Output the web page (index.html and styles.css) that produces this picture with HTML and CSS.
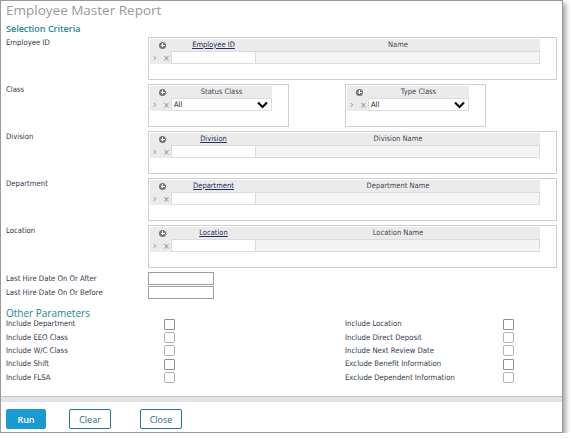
FILE: index.html
```html
<!DOCTYPE html>
<html lang="en">
<head>
  <meta charset="UTF-8">
  <title>Employee Master Report</title>
  <link rel="stylesheet" href="styles.css">
</head>
<body>
  <div class="report">
    <h1 class="report-title">Employee Master Report</h1>

    <div class="report-body">
      <h2 class="section-title">Selection Criteria</h2>

      <div class="field">
        <label class="field-label">Employee ID</label>
        <div class="lookup">
          <div class="lookup-head">
            <span class="icon-col"><span class="add-icon"></span></span>
            <span class="key-col"><a href="#">Employee ID</a></span>
            <span class="name-col">Name</span>
          </div>
          <div class="lookup-row">
            <span class="icon-col"><span class="arrow">›</span><span class="remove">×</span></span>
            <span class="key-col cell-input"></span>
            <span class="name-col cell-readonly"></span>
          </div>
        </div>
      </div>

      <div class="field">
        <label class="field-label">Class</label>
        <div class="pair">
          <div class="lookup lookup-small">
            <div class="lookup-head">
              <span class="icon-col"><span class="add-icon"></span></span>
              <span class="select-col">Status Class</span>
            </div>
            <div class="lookup-row">
              <span class="icon-col"><span class="arrow">›</span><span class="remove">×</span></span>
              <span class="select-col cell-select">All<svg class="chevron" width="11" height="8" viewBox="0 0 11 8"><path d="M1 1.5 L5.5 6 L10 1.5" fill="none" stroke="#111" stroke-width="2.2"/></svg></span>
            </div>
          </div>
          <div class="lookup lookup-small">
            <div class="lookup-head">
              <span class="icon-col"><span class="add-icon"></span></span>
              <span class="select-col">Type Class</span>
            </div>
            <div class="lookup-row">
              <span class="icon-col"><span class="arrow">›</span><span class="remove">×</span></span>
              <span class="select-col cell-select">All<svg class="chevron" width="11" height="8" viewBox="0 0 11 8"><path d="M1 1.5 L5.5 6 L10 1.5" fill="none" stroke="#111" stroke-width="2.2"/></svg></span>
            </div>
          </div>
        </div>
      </div>

      <div class="field">
        <label class="field-label">Division</label>
        <div class="lookup">
          <div class="lookup-head">
            <span class="icon-col"><span class="add-icon"></span></span>
            <span class="key-col"><a href="#">Division</a></span>
            <span class="name-col">Division Name</span>
          </div>
          <div class="lookup-row">
            <span class="icon-col"><span class="arrow">›</span><span class="remove">×</span></span>
            <span class="key-col cell-input"></span>
            <span class="name-col cell-readonly"></span>
          </div>
        </div>
      </div>

      <div class="field">
        <label class="field-label">Department</label>
        <div class="lookup">
          <div class="lookup-head">
            <span class="icon-col"><span class="add-icon"></span></span>
            <span class="key-col"><a href="#">Department</a></span>
            <span class="name-col">Department Name</span>
          </div>
          <div class="lookup-row">
            <span class="icon-col"><span class="arrow">›</span><span class="remove">×</span></span>
            <span class="key-col cell-input"></span>
            <span class="name-col cell-readonly"></span>
          </div>
        </div>
      </div>

      <div class="field">
        <label class="field-label">Location</label>
        <div class="lookup">
          <div class="lookup-head">
            <span class="icon-col"><span class="add-icon"></span></span>
            <span class="key-col"><a href="#">Location</a></span>
            <span class="name-col">Location Name</span>
          </div>
          <div class="lookup-row">
            <span class="icon-col"><span class="arrow">›</span><span class="remove">×</span></span>
            <span class="key-col cell-input"></span>
            <span class="name-col cell-readonly"></span>
          </div>
        </div>
      </div>

      <div class="date-field">
        <label class="field-label">Last Hire Date On Or After</label>
        <input class="date-input" type="text">
      </div>
      <div class="date-field">
        <label class="field-label">Last Hire Date On Or Before</label>
        <input class="date-input" type="text">
      </div>

      <h2 class="section-title other">Other Parameters</h2>

      <div class="params">
        <div class="param"><span>Include Department</span><span class="check"></span></div>
        <div class="param"><span>Include Location</span><span class="check"></span></div>
        <div class="param"><span>Include EEO Class</span><span class="check soft"></span></div>
        <div class="param"><span>Include Direct Deposit</span><span class="check soft"></span></div>
        <div class="param"><span>Include W/C Class</span><span class="check soft"></span></div>
        <div class="param"><span>Include Next Review Date</span><span class="check soft"></span></div>
        <div class="param"><span>Include Shift</span><span class="check"></span></div>
        <div class="param"><span>Exclude Benefit Information</span><span class="check"></span></div>
        <div class="param"><span>Include FLSA</span><span class="check soft"></span></div>
        <div class="param"><span>Exclude Dependent Information</span><span class="check soft"></span></div>
      </div>
    </div>

    <div class="report-footer">
      <button class="btn btn-primary">Run</button>
      <button class="btn">Clear</button>
      <button class="btn">Close</button>
    </div>
  </div>
</body>
</html>
```

FILE: styles.css
```css
body {
  margin: 0;
  background: #fff;
  font-family: 'DejaVu Sans Condensed', 'DejaVu Sans', sans-serif;
  color: #33394a;
}

.report {
  width: 561px;
  height: 431px;
  border: 1px solid #9a9a9a;
  background: #fff;
  box-shadow: 3px 3px 5px rgba(0, 0, 0, 0.35);
  display: flex;
  flex-direction: column;
}

.report-title {
  margin: 0;
  padding: 0 5px;
  height: 21px;
  font-family: 'Open Sans', sans-serif;
  font-weight: normal;
  font-size: 13.5px;
  line-height: 19px;
  color: #9a9a9a;
}

.report-body {
  flex: 1;
  padding: 0 5px;
}

.section-title {
  margin: 0;
  height: 15px;
  font-family: 'Open Sans', sans-serif;
  font-weight: 600;
  font-size: 9px;
  line-height: 14px;
  color: #1b8795;
}

.section-title.other {
  font-weight: normal;
  font-size: 10px;
  margin-top: 8px;
  height: 12px;
  line-height: 12px;
}

.field {
  display: flex;
  margin-bottom: 4px;
}

.field-label {
  width: 142px;
  flex-shrink: 0;
  font-size: 7.7px;
  line-height: 10px;
  padding-top: 1px;
}

.pair {
  display: flex;
  gap: 56px;
}

.lookup {
  width: 407px;
  height: 39px;
  border: 1px solid #cfcfcf;
  padding: 1px;
  box-sizing: content-box;
}

.lookup-small {
  width: 137px;
}

.lookup-head,
.lookup-row {
  display: flex;
}

.lookup-head {
  height: 12px;
  background: #ebebeb;
  width: 390px;
  font-size: 7.5px;
  line-height: 12px;
  color: #444a5a;
}

.lookup-small .lookup-head,
.lookup-small .lookup-row {
  width: 122px;
}

.lookup-row {
  height: 13px;
  width: 390px;
  background: #ebebeb;
}

.icon-col {
  width: 21px;
  flex-shrink: 0;
  display: flex;
  align-items: center;
  color: #8a8a8a;
  font-size: 8px;
}

.lookup-head .icon-col {
  justify-content: flex-end;
  padding-right: 5px;
  box-sizing: border-box;
}

.add-icon {
  position: relative;
  width: 7px;
  height: 7px;
  border-radius: 50%;
  background: #777;
}

.add-icon::before,
.add-icon::after {
  content: '';
  position: absolute;
  background: #fff;
}

.add-icon::before {
  left: 1.5px;
  top: 3px;
  width: 4px;
  height: 1px;
}

.add-icon::after {
  left: 3px;
  top: 1.5px;
  width: 1px;
  height: 4px;
}

.arrow {
  margin-left: 3px;
  width: 10px;
  font-size: 10px;
  line-height: 12px;
}

.remove {
  font-size: 9px;
  line-height: 12px;
}

.key-col {
  width: 85px;
  text-align: center;
}

.key-col a {
  color: #1f2f5e;
  text-decoration: underline;
}

.name-col {
  flex: 1;
  text-align: center;
}

.select-col {
  flex: 1;
  text-align: center;
}

.cell-input {
  background: #fff;
  border: 1px solid #dcdcdc;
  box-sizing: border-box;
}

.cell-readonly {
  background: #f4f4f4;
  border: 1px solid #dcdcdc;
  border-left: 0;
  box-sizing: border-box;
}

.cell-select {
  background: #fff;
  border: 1px solid #dcdcdc;
  box-sizing: border-box;
  display: flex;
  align-items: center;
  justify-content: space-between;
  padding: 0 3px 0 2px;
  font-size: 7.5px;
  color: #111;
  text-align: left;
}

.chevron {
  display: block;
}

.date-field {
  display: flex;
  align-items: center;
  height: 13px;
  margin-bottom: 1px;
}

.date-field .field-label {
  padding-top: 0;
}

.date-input {
  width: 66px;
  height: 13px;
  margin: 0;
  padding: 0;
  border: 1px solid #9d9d9d;
  box-sizing: border-box;
}

.params {
  display: grid;
  grid-template-columns: 339px 1fr;
  row-gap: 3px;
}

.param {
  display: flex;
  align-items: center;
  height: 10.4px;
  font-size: 7.7px;
  line-height: 10px;
}

.param span:first-child {
  width: 158px;
  flex-shrink: 0;
}

.check {
  width: 9px;
  height: 9px;
  border: 1px solid #8f8f8f;
  border-radius: 1px;
}

.check.soft {
  border-color: #b4b4b4;
  border-radius: 2px;
}

.report-footer {
  border-top: 1px solid #c8c8c8;
  display: flex;
  gap: 23px;
  padding: 12px 5px 3px;
  background: linear-gradient(#e4e4e4 0, #e4e4e4 5px, #fff 5px);
}

.report-footer .btn + .btn + .btn {
  margin-left: 6px;
}

.btn {
  height: 20px;
  min-width: 42px;
  padding: 0 8px;
  border: 1px solid #23788a;
  border-radius: 2px;
  background: #fff;
  color: #1e6a80;
  font-family: 'Open Sans', sans-serif;
  font-size: 9px;
  cursor: pointer;
}

.btn-primary {
  min-width: 40px;
  background: #1a9ad0;
  border-color: #1a9ad0;
  color: #fff;
  font-weight: 600;
}
```
